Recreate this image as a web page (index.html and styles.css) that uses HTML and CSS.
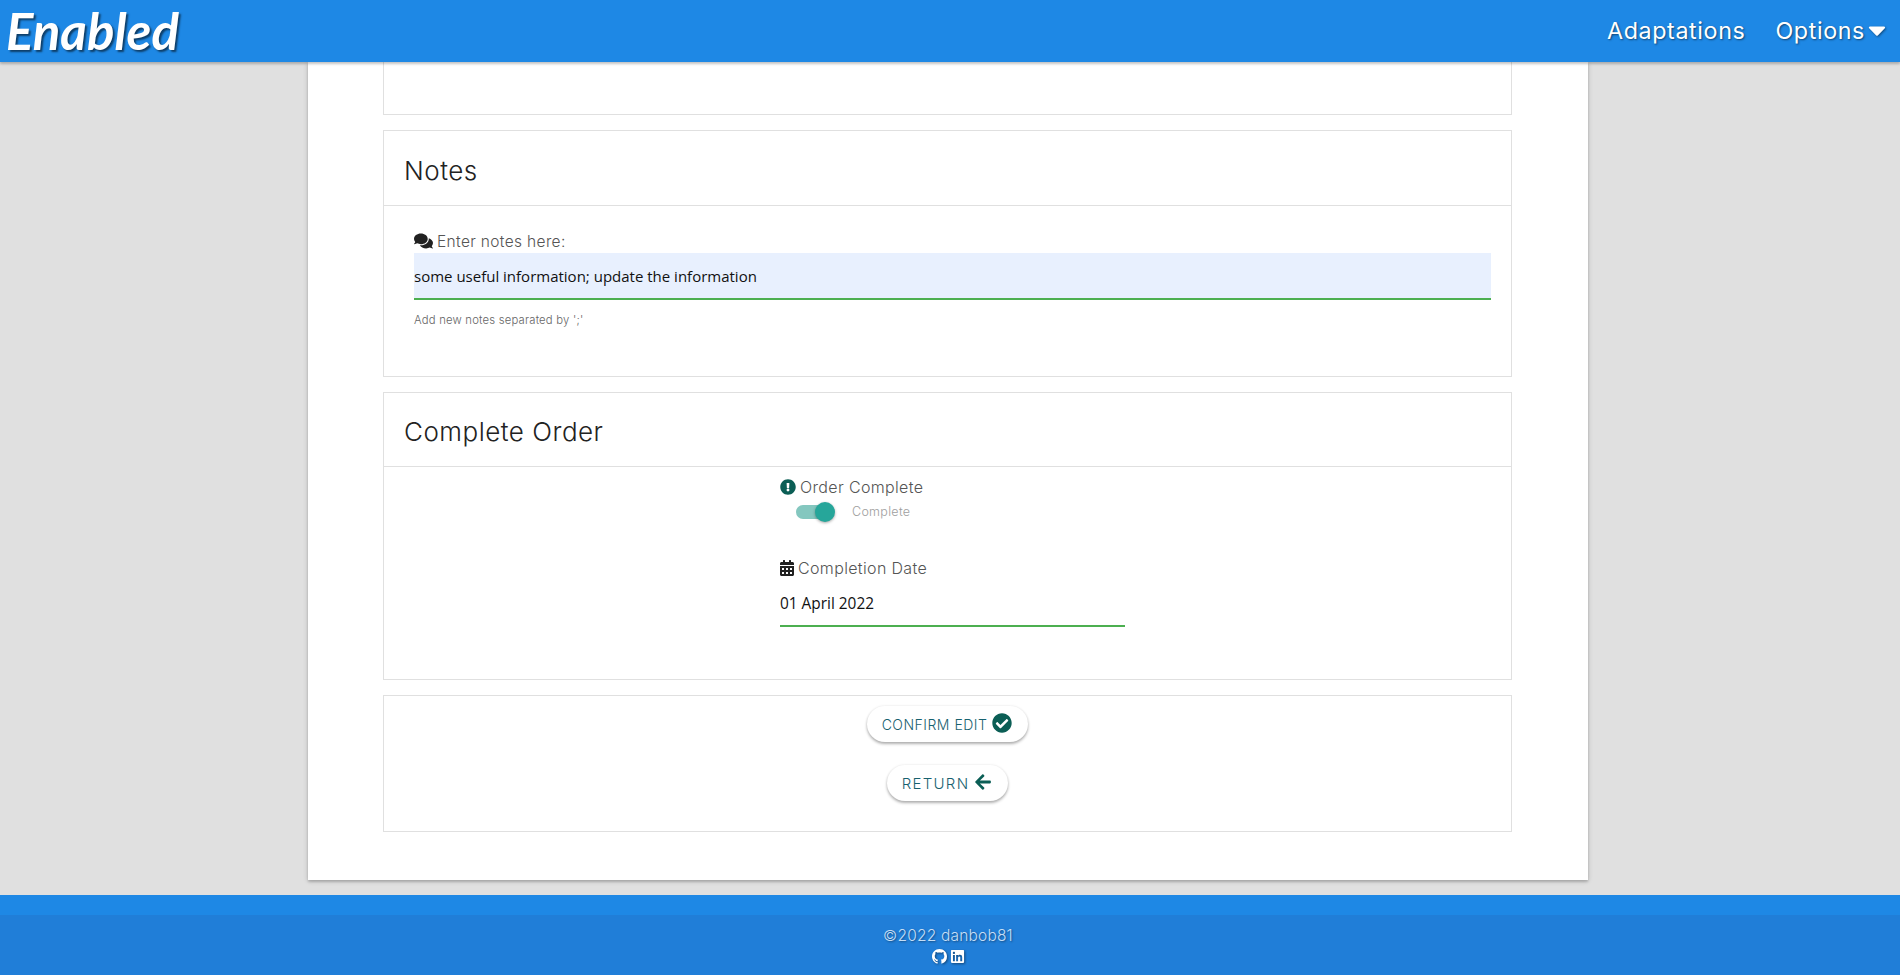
FILE: index.html
```html
<!DOCTYPE html>
<html lang="en">
<head>
<meta charset="utf-8">
<title>Enabled</title>
<link rel="stylesheet" href="styles.css">
</head>
<body>
<nav class="navbar">
  <a class="brand">Enabled</a>
  <ul class="nav-links">
    <li>Adaptations</li>
    <li class="nav-options">Options
      <svg class="caret" viewBox="0 0 320 512"><path d="M31.3 192h257.3c17.8 0 26.7 21.5 14.1 34.1L174.1 354.8c-7.8 7.8-20.5 7.8-28.3 0L17.2 226.1C4.6 213.5 13.5 192 31.3 192z"/></svg>
    </li>
  </ul>
</nav>
<main class="page">
  <div class="container">
    <section class="card card-partial"></section>

    <section class="card card-notes">
      <h2 class="card-title">Notes</h2>
      <div class="card-body notes-body">
        <label class="label label-notes">
          <svg class="icon icon-comments" viewBox="0 0 576 512"><path d="M416 192c0-88.4-93.1-160-208-160S0 103.6 0 192c0 34.3 14.1 65.9 38 92-13.4 30.2-35.5 54.2-35.8 54.5-2.2 2.3-2.8 5.7-1.5 8.7S4.8 352 8 352c36.6 0 66.9-12.3 88.7-25 32.2 15.7 70.3 25 111.3 25 114.9 0 208-71.6 208-160zm122 220c23.9-26 38-57.7 38-92 0-66.9-53.5-124.2-129.3-148.1.9 6.6 1.3 13.3 1.3 20.1 0 105.9-107.7 192-240 192-10.8 0-21.3-.8-31.7-1.9C207.8 439.6 281.8 480 368 480c41 0 79.1-9.2 111.3-25 21.8 12.7 52.1 25 88.7 25 3.2 0 6.1-1.9 7.3-4.8 1.3-2.9.7-6.3-1.5-8.7-.3-.3-22.4-24.2-35.8-54.5z"/></svg>
          Enter notes here:
        </label>
        <div class="input input-filled">some useful information; update the information</div>
        <p class="helper">Add new notes separated by ';'</p>
      </div>
    </section>

    <section class="card card-complete">
      <h2 class="card-title card-title-short">Complete Order</h2>
      <div class="card-body complete-body">
        <div class="complete-col">
          <label class="label label-order">
            <svg class="icon icon-teal" viewBox="0 0 512 512"><path d="M504 256c0 136.997-111.043 248-248 248S8 392.997 8 256C8 119.083 119.043 8 256 8s248 111.083 248 248zm-248 50c-25.405 0-46 20.595-46 46s20.595 46 46 46 46-20.595 46-46-20.595-46-46-46zm-43.673-165.346l7.418 136c.347 6.364 5.609 11.346 11.982 11.346h48.546c6.373 0 11.635-4.982 11.982-11.346l7.418-136c.375-6.874-5.098-12.654-11.982-12.654h-63.383c-6.884 0-12.356 5.78-11.981 12.654z"/></svg>
            Order Complete
          </label>
          <div class="switch-row">
            <span class="switch"><span class="switch-knob"></span></span>
            <span class="switch-text">Complete</span>
          </div>
          <label class="label label-date">
            <svg class="icon icon-cal" viewBox="0 0 448 512"><path d="M0 464c0 26.5 21.5 48 48 48h352c26.5 0 48-21.5 48-48V192H0v272zm320-196c0-6.6 5.4-12 12-12h40c6.6 0 12 5.4 12 12v40c0 6.6-5.4 12-12 12h-40c-6.6 0-12-5.4-12-12v-40zm0 128c0-6.6 5.4-12 12-12h40c6.6 0 12 5.4 12 12v40c0 6.6-5.4 12-12 12h-40c-6.6 0-12-5.4-12-12v-40zM192 268c0-6.6 5.4-12 12-12h40c6.6 0 12 5.4 12 12v40c0 6.6-5.4 12-12 12h-40c-6.6 0-12-5.4-12-12v-40zm0 128c0-6.6 5.4-12 12-12h40c6.6 0 12 5.4 12 12v40c0 6.6-5.4 12-12 12h-40c-6.6 0-12-5.4-12-12v-40zM64 268c0-6.6 5.4-12 12-12h40c6.6 0 12 5.4 12 12v40c0 6.6-5.4 12-12 12H76c-6.6 0-12-5.4-12-12v-40zm0 128c0-6.6 5.4-12 12-12h40c6.6 0 12 5.4 12 12v40c0 6.6-5.4 12-12 12H76c-6.6 0-12-5.4-12-12v-40zM400 64h-48V16c0-8.8-7.2-16-16-16h-32c-8.8 0-16 7.2-16 16v48H160V16c0-8.8-7.2-16-16-16h-32c-8.8 0-16 7.2-16 16v48H48C21.5 64 0 85.5 0 112v48h448v-48c0-26.5-21.5-48-48-48z"/></svg>
            Completion Date
          </label>
          <div class="input input-date">01 April 2022</div>
        </div>
      </div>
    </section>

    <section class="card card-actions">
      <button class="btn btn-confirm">CONFIRM EDIT
        <svg class="btn-icon-check" viewBox="0 0 512 512"><path d="M504 256c0 136.967-111.033 248-248 248S8 392.967 8 256 119.033 8 256 8s248 111.033 248 248zM227.314 387.314l184-184c6.248-6.248 6.248-16.379 0-22.627l-22.627-22.627c-6.248-6.249-16.379-6.249-22.628 0L216 308.118l-70.059-70.059c-6.248-6.248-16.379-6.248-22.628 0l-22.627 22.627c-6.248 6.248-6.248 16.379 0 22.627l104 104c6.249 6.249 16.379 6.249 22.628.001z"/></svg>
      </button>
      <button class="btn btn-return">RETURN
        <svg class="btn-icon-arrow" viewBox="0 0 448 512"><path d="M257.5 445.1l-22.2 22.2c-9.4 9.4-24.6 9.4-33.9 0L7 273c-9.4-9.4-9.4-24.6 0-33.9L201.4 44.7c9.4-9.4 24.6-9.4 33.9 0l22.2 22.2c9.5 9.5 9.3 25-.4 34.3L136.6 216H424c13.3 0 24 10.7 24 24v32c0 13.3-10.7 24-24 24H136.6l120.5 114.8c9.8 9.3 10 24.8.4 34.3z"/></svg>
      </button>
    </section>
  </div>
</main>
<footer class="footer">
  <div class="footer-band"></div>
  <div class="copyright">
    <span class="copy-text">©2022 danbob81</span>
    <span class="social">
      <svg class="social-icon" viewBox="0 0 16 16"><path d="M8 0C3.58 0 0 3.58 0 8c0 3.54 2.29 6.53 5.47 7.59.4.07.55-.17.55-.38 0-.19-.01-.82-.01-1.49-2.01.37-2.53-.49-2.69-.94-.09-.23-.48-.94-.82-1.13-.28-.15-.68-.52-.01-.53.63-.01 1.08.58 1.23.82.72 1.21 1.87.87 2.33.66.07-.52.28-.87.51-1.07-1.78-.2-3.64-.89-3.64-3.95 0-.87.31-1.59.82-2.15-.08-.2-.36-1.02.08-2.12 0 0 .67-.21 2.2.82.64-.18 1.32-.27 2-.27.68 0 1.36.09 2 .27 1.53-1.04 2.2-.82 2.2-.82.44 1.1.16 1.92.08 2.12.51.56.82 1.27.82 2.15 0 3.07-1.87 3.75-3.65 3.95.29.25.54.73.54 1.48 0 1.07-.01 1.93-.01 2.2 0 .21.15.46.55.38A8.013 8.013 0 0016 8c0-4.42-3.58-8-8-8z"/></svg>
      <svg class="social-icon" viewBox="0 0 448 512"><path d="M416 32H31.9C14.3 32 0 46.5 0 64.3v383.4C0 465.5 14.3 480 31.9 480H416c17.6 0 32-14.5 32-32.3V64.3c0-17.8-14.4-32.3-32-32.3zM135.4 416H69V202.2h66.5V416zm-33.2-243c-21.3 0-38.5-17.3-38.5-38.5S80.9 96 102.2 96c21.2 0 38.5 17.3 38.5 38.5 0 21.3-17.2 38.5-38.5 38.5zm282.1 243h-66.4V312c0-24.8-.5-56.7-34.5-56.7-34.6 0-39.9 27-39.9 54.9V416h-66.4V202.2h63.7v29.2h.9c8.9-16.8 30.6-34.5 62.9-34.5 67.2 0 79.7 44.3 79.7 101.9V416z"/></svg>
    </span>
  </div>
</footer>
</body>
</html>
```
FILE: styles.css
```css
* { box-sizing: border-box; }
html, body { height: 100%; }
body {
  margin: 0;
  height: 975px;
  overflow: hidden;
  display: flex;
  flex-direction: column;
  background: #e0e0e0;
  font-family: "Inter", "Liberation Sans", sans-serif;
  font-weight: 300;
  color: #333;
}

/* Navbar */
.navbar {
  height: 62px;
  flex: none;
  position: relative;
  z-index: 2;
  background: #1e88e5;
  display: flex;
  align-items: center;
  justify-content: space-between;
  padding: 0 14px 0 6px;
  box-shadow: 0 2px 2px rgba(0,0,0,.16), 0 1px 4px rgba(0,0,0,.12);
  color: #fff;
}
.brand {
  font-family: "Lato", "Liberation Sans", sans-serif;
  font-style: italic;
  font-weight: 700;
  font-size: 51px;
  line-height: 62px;
  text-shadow: 2px 2px 2px rgba(0,0,0,.55);
}
.nav-links {
  list-style: none;
  margin: 0;
  padding: 0 0 2px;
  display: flex;
  align-items: center;
  gap: 30px;
  font-size: 23.3px;
  font-weight: 400;
  letter-spacing: 0.6px;
  text-shadow: 1px 1px 2px rgba(0,0,0,.5);
}
.nav-options { display: flex; align-items: center; gap: 3px; }
.caret {
  width: 18px;
  height: 28px;
  fill: #fff;
  filter: drop-shadow(1px 1px 1px rgba(0,0,0,.45));
}

/* Page container */
.page { flex: 1; min-height: 0; display: flex; justify-content: center; padding-right: 4px; }
.container {
  width: 1280px;
  height: 818px;
  background: #fff;
  padding: 0 76px 0 75px;
  box-shadow: 0 2px 2px rgba(0,0,0,.14), 0 1px 5px rgba(0,0,0,.2);
}

/* Cards */
.card {
  border: 1px solid #e0e0e0;
  margin-bottom: 15px;
  background: #fff;
}
.card-partial { height: 53px; border-top: 0; }
.card-notes { height: 247px; }
.card-complete { height: 288px; }
.card-title {
  margin: 0;
  height: 75px;
  padding: 4px 20px 0;
  display: flex;
  align-items: center;
  font-size: 26px;
  font-weight: 300;
  letter-spacing: 0.5px;
  color: #222;
  border-bottom: 1px solid #e0e0e0;
}
.card-title-short { height: 74px; }
.notes-body { padding: 26px 20px 0 30px; }
.label {
  display: flex;
  align-items: center;
  gap: 4px;
  font-size: 15.5px;
  line-height: 20px;
  letter-spacing: 0.35px;
  color: #555;
}
.label-notes { height: 21px; align-items: flex-start; }
.icon { height: 16px; width: auto; fill: #212121; flex: none; }
.icon-comments { width: 19px; height: 18px; }
.icon-teal { fill: #0b5e55; width: 16px; }
.input {
  font-family: "Open Sans", "Liberation Sans", sans-serif;
  font-weight: 400;
  font-size: 15px;
  color: #111;
  border-bottom: 2px solid #4caf50;
  display: flex;
  align-items: center;
}
.input-filled {
  height: 47px;
  background: #e8f0fe;
}
.helper {
  margin: 13px 0 0;
  font-size: 11.3px;
  line-height: 14px;
  letter-spacing: 0.2px;
  color: #666;
}

/* Complete order */
.complete-body { display: flex; justify-content: center; }
.complete-col { width: 345px; padding-top: 10px; margin-left: 10px; }
.label-order { font-size: 16px; line-height: 20px; }
.switch-row { display: flex; align-items: center; height: 26px; padding: 4px 0 0 16px; }
.switch {
  position: relative;
  display: block;
  width: 36px;
  height: 14px;
  border-radius: 7px;
  background: #84c7bf;
}
.switch-knob {
  position: absolute;
  top: -3px;
  right: -3px;
  width: 20px;
  height: 20px;
  border-radius: 50%;
  background: #26a69a;
  box-shadow: 0 1px 3px rgba(0,0,0,.35);
}
.switch-text {
  margin: -2px 0 0 20px;
  font-size: 12.5px;
  letter-spacing: 0.3px;
  color: #9e9e9e;
}
.label-date { margin-top: 35px; gap: 4px; font-size: 16px; }
.icon-cal { width: 14px; }
.input-date {
  width: 345px;
  height: 47px;
  margin-top: 2px;
  padding-top: 2px;
  font-size: 15.4px;
}

/* Buttons */
.card-actions {
  height: 137px;
  display: flex;
  flex-direction: column;
  align-items: center;
  padding-top: 10px;
  margin-bottom: 0;
}
.btn {
  display: flex;
  align-items: center;
  justify-content: center;
  height: 36px;
  border: 0;
  border-radius: 18px;
  background: #fff;
  font-family: "Inter", "Liberation Sans", sans-serif;
  font-size: 14px;
  font-weight: 300;
  letter-spacing: 0.5px;
  color: #17616f;
  box-shadow: 0 2px 3px rgba(0,0,0,.3), 0 0 3px rgba(0,0,0,.08);
  padding: 0;
  gap: 5px;
}
.btn-confirm { width: 161px; margin-left: -1px; }
.btn-return { width: 121px; margin-top: 23px; margin-left: -1px; letter-spacing: 1.3px; font-size: 15px; }
.btn-icon-check { width: 20px; height: 20px; fill: #0b5e55; margin-top: -2px; }
.btn-icon-arrow { width: 18px; height: 18px; fill: #0b5e55; margin-top: -2px; }

/* Footer */
.footer { flex: none; height: 80px; background: #1e88e5; color: #fff; }
.footer-band { height: 20px; }
.copyright {
  height: 60px;
  background: #207ed8;
  display: flex;
  flex-direction: column;
  align-items: center;
  padding: 11px 4px 0 0;
}
.copy-text {
  font-size: 15.5px;
  line-height: 20px;
  color: #c5def6;
  letter-spacing: 0.2px;
  text-shadow: 1px 1px 2px rgba(0,0,0,.4);
}
.social { display: flex; gap: 3px; margin-top: 3px; }
.social-icon {
  width: 15px;
  height: 15px;
  fill: #fff;
  filter: drop-shadow(1px 1px 1px rgba(0,0,0,.45));
}
```
